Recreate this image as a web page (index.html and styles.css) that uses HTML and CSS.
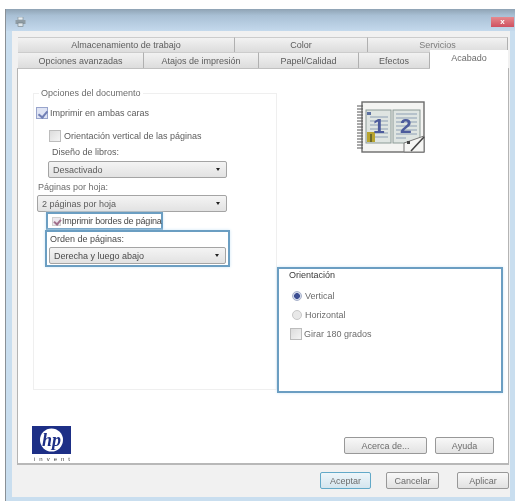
FILE: index.html
```html
<!DOCTYPE html>
<html lang="es">
<head>
<meta charset="utf-8">
<title>Acabado</title>
<link rel="stylesheet" href="styles.css">
</head>
<body>
<div class="window">
  <div class="titlebar">
    <svg class="app-icon" width="11" height="10" viewBox="0 0 11 10">
      <rect x="3" y="0" width="5" height="3" fill="#e8eef2" stroke="#7d8a90" stroke-width=".6"/>
      <rect x="0.5" y="3" width="10" height="4" fill="#8f9ca4"/>
      <rect x="3" y="6" width="5" height="3.5" fill="#dfe6ea" stroke="#6f7c82" stroke-width=".6"/>
    </svg>
    <div class="close"><span class="x">x</span></div>
  </div>
  <div class="dialog">
    <div class="tabs tabs-back">
      <div class="tab t1">Almacenamiento de trabajo</div>
      <div class="tab t2">Color</div>
      <div class="tab t3">Servicios</div>
    </div>
    <div class="tabs tabs-front">
      <div class="tab f1">Opciones avanzadas</div>
      <div class="tab f2">Atajos de impresión</div>
      <div class="tab f3">Papel/Calidad</div>
      <div class="tab f4">Efectos</div>
      <div class="tab f5 active">Acabado</div>
    </div>
    <div class="panel">
      <div class="cols">
        <fieldset class="group">
          <legend>Opciones del documento</legend>
          <div class="check-row row-both"><span class="box checked"></span><span>Imprimir en ambas caras</span></div>
          <div class="check-row row-orient"><span class="box"></span><span>Orientación vertical de las páginas</span></div>
          <div class="label label-book">Diseño de libros:</div>
          <div class="select sel-book"><span>Desactivado</span><i class="arrow"></i></div>
          <div class="label label-pages">Páginas por hoja:</div>
          <div class="select sel-pages"><span>2 páginas por hoja</span><i class="arrow"></i></div>
          <div class="frame frame-borders"><span class="box checked small"></span><span class="tight">Imprimir bordes de página</span></div>
          <div class="frame frame-order">
            <div class="label">Orden de páginas:</div>
            <div class="select sel-order"><span>Derecha y luego abajo</span><i class="arrow"></i></div>
          </div>
        </fieldset>
        <div class="right">
          <svg class="preview" width="68" height="54" viewBox="0 0 68 54">
            <rect x="5" y="1" width="62" height="50" fill="#f4f4f2" stroke="#6c6c6c" stroke-width="1.4"/>
            <g stroke="#555" stroke-width="1">
              <path d="M0 5h6M0 8h6M0 11h6M0 14h6M0 17h6M0 20h6M0 23h6M0 26h6M0 29h6M0 32h6M0 35h6M0 38h6M0 41h6M0 44h6M0 47h6"/>
            </g>
            <rect x="9" y="9" width="25" height="33" fill="#dfe5e2" stroke="#8b9a96"/>
            <rect x="36" y="9" width="27" height="33" fill="#dfe5e2" stroke="#8b9a96"/>
            <path d="M13 16h18M13 20h18M13 24h18M13 28h18M13 32h18M13 36h18M39 13h21M39 17h21M39 21h21M39 25h21M39 29h21M39 33h21M39 37h10" stroke="#a9b6c4" stroke-width="1.4"/>
            <rect x="10" y="11" width="4" height="3" fill="#5b6fa0"/>
            <rect x="10" y="31" width="8" height="10" fill="#b8a42e"/>
            <rect x="13" y="33" width="2" height="8" fill="#6d6a2a"/>
            <text x="16" y="32" class="num">1</text>
            <text x="43" y="32" class="num">2</text>
            <path d="M47 51 L47 42 L67 35 L67 51 Z" fill="#f6f6f4" stroke="#777"/>
            <path d="M67 36 L54 50" stroke="#444" stroke-width="1.6"/>
            <rect x="50" y="40" width="3" height="3" fill="#444"/>
          </svg>
          <div class="frame frame-orient">
            <div class="label orient-title">Orientación</div>
            <div class="opt opt-first"><span class="radio on"></span><span>Vertical</span></div>
            <div class="opt"><span class="radio"></span><span>Horizontal</span></div>
            <div class="opt"><span class="box"></span><span>Girar 180 grados</span></div>
          </div>
        </div>
      </div>
      <div class="foot">
        <div class="brand">
          <svg width="39" height="28" viewBox="0 0 39 28">
            <rect width="39" height="28" fill="#1d2f86"/>
            <circle cx="19.5" cy="14" r="11.5" fill="#fff"/>
            <text x="19.5" y="20" class="hp">hp</text>
          </svg>
          <div class="invent">invent</div>
        </div>
        <div class="panel-buttons">
          <div class="btn btn-about">Acerca de...</div>
          <div class="btn btn-help">Ayuda</div>
        </div>
      </div>
    </div>
    <div class="actions">
      <div class="btn btn-ok">Aceptar</div>
      <div class="btn btn-cancel">Cancelar</div>
      <div class="btn btn-apply">Aplicar</div>
    </div>
  </div>
</div>
</body>
</html>
```

FILE: styles.css
```css
* { box-sizing: border-box; }
html, body { margin: 0; height: 100%; }
body {
  padding: 9px 5px 0;
  background: #fff;
  font-family: "Liberation Sans", Arial, sans-serif;
  font-size: 9px;
  line-height: 10px;
  color: #5c5c5c;
  overflow: hidden;
}
.window {
  width: 510px;
  height: 492px;
  background: #c9deef;
  border-left: 1px solid #8a9096;
  filter: blur(0.55px);
}
.titlebar {
  height: 22px;
  display: flex;
  align-items: center;
  justify-content: space-between;
  padding: 4px 1px 0 9px;
  background: linear-gradient(#8fa3b4, #a9c0d5 30%, #c4d9ec);
}
.close {
  width: 23px;
  height: 10px;
  background: linear-gradient(#e58a8e, #cf5060);
  display: flex;
  align-items: center;
  justify-content: center;
}
.x { color: #fff; font-weight: bold; font-size: 8px; line-height: 8px; }
.dialog {
  margin: 0 5px 0 6px;
  height: 466px;
  background: #f1f1f1;
  padding: 6px 1px 0 5px;
}
.tabs { display: flex; }
.tab {
  display: flex;
  align-items: center;
  justify-content: center;
  background: linear-gradient(#f2f2f2, #dcdcdc);
  border-right: 1px solid #b0b0b0;
  border-top: 1px solid #cccccc;
}
.tabs-back { height: 15px; padding-left: 1px; }
.tabs-front { height: 16px; padding-left: 1px; align-items: flex-end; }
.t1 { width: 217px; }
.t2 { width: 133px; }
.t3 { width: 140px; color: #7c7c7c; }
.f1 { width: 126px; height: 16px; }
.f2 { width: 115px; height: 16px; }
.f3 { width: 100px; height: 16px; }
.f4 { width: 71px; height: 16px; }
.f5 { width: 78px; }
.tab.active {
  height: 19px;
  margin-bottom: -1px;
  background: #fff;
  border: 0;
  position: relative;
  padding-bottom: 3px;
  color: #6c6c6c;
}
.panel {
  width: 492px;
  height: 397px;
  background: #fff;
  border: 1px solid #b4b4b4;
  border-top-color: #c0c0c0;
  border-bottom: 2px solid #b8b8b8;
}
.cols { display: flex; height: 357px; padding: 18px 0 0 15px; }
.group {
  width: 244px;
  height: 303px;
  margin: 0;
  padding: 0;
  border: 1px solid #efefef;
  flex: none;
}
.group legend {
  padding: 0 2px;
  margin-left: 5px;
  height: 12px;
  line-height: 12px;
  color: #6c6c6c;
}
.check-row, .opt, .frame-borders { display: flex; align-items: center; }
.row-both { margin: 8px 0 0 2px; gap: 2px; height: 12px; }
.row-orient { margin: 11px 0 0 15px; gap: 3px; height: 12px; }
.box {
  width: 12px;
  height: 12px;
  flex: none;
  background: linear-gradient(135deg, #dcdcdc, #f4f4f4);
  border: 1px solid #bcbcbc;
  position: relative;
}
.box.checked { background: #dfe4f4; border-color: #98a4cc; }
.box.checked::after {
  content: "";
  position: absolute;
  left: 3px;
  top: 1px;
  width: 4px;
  height: 7px;
  border: solid #7280b6;
  border-width: 0 2px 2px 0;
  transform: rotate(40deg);
}
.box.small { width: 9px; height: 9px; margin-left: 4px; background: #ece8ee; border-color: #d0d0d0; }
.box.small::after { left: 2px; top: 0; width: 3px; height: 5px; border-color: #a0708c; }
.label { height: 10px; color: #6c6c6c; }
.label-book { margin: 5px 0 0 18px; color: #5c5c5c; }
.label-pages { margin: 4px 0 0 4px; }
.select {
  height: 17px;
  display: flex;
  align-items: center;
  justify-content: space-between;
  padding: 0 6px 0 4px;
  background: linear-gradient(#f4f4f4, #e2e2e2);
  border: 1px solid #a4a4a4;
  border-radius: 2px;
}
.arrow {
  width: 0;
  height: 0;
  border: solid transparent;
  border-width: 3px 2.5px 0;
  border-top-color: #222;
}
.sel-book { width: 179px; margin: 4px 0 0 14px; }
.sel-pages { width: 190px; margin: 3px 0 0 3px; }
.frame { border: 2px solid #6b9ec2; background: #fff; box-shadow: 0 0 3px #cfe6f6; }
.frame-borders {
  width: 117px;
  height: 18px;
  margin: 0 0 0 12px;
  gap: 1px;
  white-space: nowrap;
  color: #4a4a4a;
}
.tight { letter-spacing: -0.2px; }
.frame-order {
  width: 185px;
  height: 37px;
  margin: 0 0 0 11px;
  padding: 2px 2px 0;
}
.frame-order .label { margin-left: 1px; color: #4a4a4a; }
.sel-order { width: 177px; margin-top: 3px; color: #4a4a4a; }
.right { flex: 1; display: flex; flex-direction: column; }
.preview { margin: 14px 0 0 80px; }
.num { font: bold 21px "Liberation Sans", sans-serif; fill: #4c5b9c; }
.frame-orient {
  width: 226px;
  height: 126px;
  margin-top: 112px;
  padding: 1px 0 0 10px;
}
.orient-title { color: #3a3a3a; }
.opt { height: 12px; margin-top: 7px; gap: 2px; color: #6c6c6c; }
.opt-first { margin-top: 10px; }
.opt .box { margin-left: 1px; }
.radio {
  width: 10px;
  height: 10px;
  margin: 0 1px 0 3px;
  border-radius: 50%;
  background: #e8e8e8;
  border: 1px solid #c8c8c8;
  flex: none;
}
.radio.on {
  background: radial-gradient(circle, #3d4f92 0 2.6px, #d3d9ea 3.2px);
  border-color: #a8b2cc;
}
.foot {
  height: 38px;
  display: flex;
  justify-content: space-between;
  padding: 0 14px 0 14px;
}
.brand { width: 39px; }
.brand svg { display: block; }
.hp { font: italic bold 18px "Liberation Serif", serif; fill: #1d2f86; text-anchor: middle; }
.invent {
  margin-top: 1px;
  height: 8px;
  line-height: 8px;
  font-size: 6px;
  letter-spacing: 4px;
  padding-left: 2px;
  color: #444;
  white-space: nowrap;
}
.panel-buttons { display: flex; gap: 8px; margin-top: 11px; }
.btn {
  height: 17px;
  display: flex;
  align-items: center;
  justify-content: center;
  background: linear-gradient(#f8f8f8, #e2e2e2);
  border: 1px solid #989898;
  border-radius: 2px;
  color: #6c6c6c;
}
.btn-about { width: 83px; }
.btn-help { width: 59px; }
.actions { display: flex; justify-content: flex-end; margin-top: 7px; padding-right: 0; }
.btn-ok { width: 51px; border-color: #62a9c8; background: linear-gradient(#eef6fa, #d4e5ee); }
.btn-cancel { width: 53px; margin-left: 15px; }
.btn-apply { width: 52px; margin-left: 18px; }
```
